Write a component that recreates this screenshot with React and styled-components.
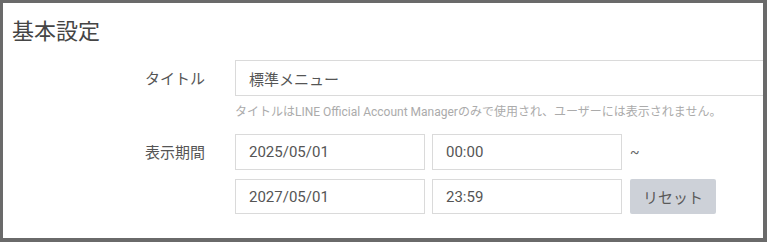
import React from "react";
import styled, { createGlobalStyle } from "styled-components";

const Global = createGlobalStyle`
  html, body { margin: 0; padding: 0; background: #fff; }
  body { font-family: Roboto, "Noto Sans CJK JP", sans-serif; }
  * { box-sizing: border-box; }
`;

const Frame = styled.div`
  width: 767px;
  height: 242px;
  border-style: solid;
  border-color: #6a6a6a;
  border-width: 3px 4px 4px 3px;
  background: #fff;
  overflow: hidden;
`;

const Heading = styled.h2`
  margin: 11px 0 0 9px;
  font-size: 22px;
  line-height: 30px;
  font-weight: 400;
  color: #454545;
  font-family: "Noto Sans CJK JP", sans-serif;
`;

const Form = styled.div`
  margin-top: 16px;
  padding-left: 142px;
  display: flex;
  flex-direction: column;
  gap: 14px;
`;

const Row = styled.div`
  display: grid;
  grid-template-columns: 90px 1fr;
`;

const Label = styled.div`
  font-size: 15px;
  line-height: 36px;
  color: #555;
  font-family: "Noto Sans CJK JP", sans-serif;
`;

const Field = styled.div`
  display: flex;
  flex-direction: column;
  min-width: 0;
`;

const Input = styled.input`
  height: ${(p) => p.$h || "36px"};
  width: ${(p) => p.$w || "600px"};
  border: 1px solid #dadada;
  border-radius: 0;
  padding: 0 13px;
  font-family: Roboto, "Noto Sans CJK JP", sans-serif;
  font-size: 15px;
  color: #555;
  background: #fff;
  outline: none;
  flex: none;
`;

const Help = styled.div`
  margin-top: 8px;
  font-size: 12px;
  line-height: 16px;
  color: #ababab;
  white-space: nowrap;
`;

const Lines = styled.div`
  display: flex;
  flex-direction: column;
  gap: 9px;
`;

const Line = styled.div`
  display: flex;
  align-items: center;
  gap: 7px;
`;

const Tilde = styled.span`
  margin-left: 1px;
  font-size: 14px;
  color: #666;
`;

const ResetButton = styled.button`
  margin-left: 1px;
  width: 86px;
  height: 35px;
  border: none;
  border-radius: 2px;
  background: #cdd1d8;
  color: #5a5a5a;
  font-size: 15px;
  font-family: "Noto Sans CJK JP", sans-serif;
  padding: 0;
`;

export default function App() {
  return (
    <>
      <Global />
      <Frame>
        <Heading>基本設定</Heading>
        <Form>
          <Row>
            <Label>タイトル</Label>
            <Field>
              <Input readOnly value="標準メニュー" $w="560px" />
              <Help>
                タイトルはLINE Official Account Managerのみで使用され、ユーザーには表示されません。
              </Help>
            </Field>
          </Row>
          <Row>
            <Label>表示期間</Label>
            <Lines>
              <Line>
                <Input readOnly value="2025/05/01" $w="190px" />
                <Input readOnly value="00:00" $w="190px" />
                <Tilde>~</Tilde>
              </Line>
              <Line>
                <Input readOnly value="2027/05/01" $w="190px" $h="35px" />
                <Input readOnly value="23:59" $w="190px" $h="35px" />
                <ResetButton>リセット</ResetButton>
              </Line>
            </Lines>
          </Row>
        </Form>
      </Frame>
    </>
  );
}
